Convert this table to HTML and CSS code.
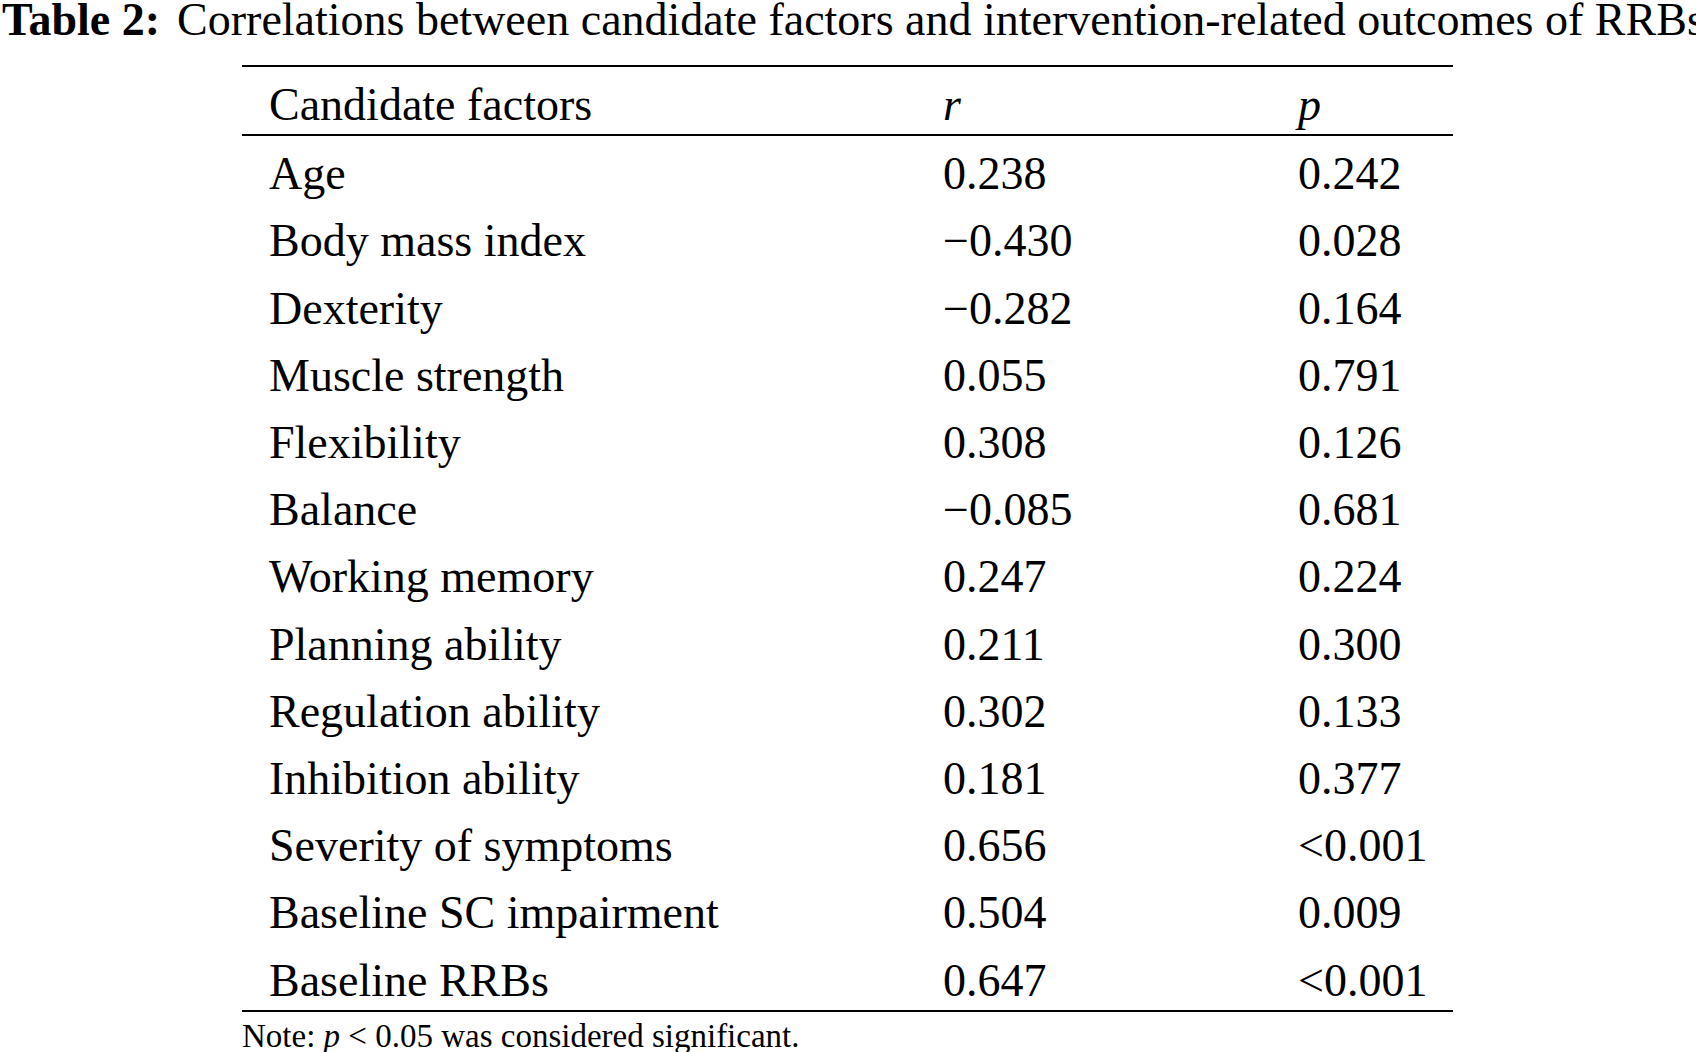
FILE: index.html
```html
<!DOCTYPE html>
<html lang="en">
<head>
<meta charset="utf-8">
<title>Table 2</title>
<link rel="stylesheet" href="styles.css">
</head>
<body>
<div class="caption"><span class="label">Table 2:</span>Correlations between candidate factors and intervention-related outcomes of RRBs</div>
<div class="table-wrap">
<table class="data">
<colgroup><col class="c1"><col class="c2"><col class="c3"></colgroup>
<thead>
<tr><th>Candidate factors</th><th><i>r</i></th><th><i>p</i></th></tr>
</thead>
<tbody>
<tr><td>Age</td><td>0.238</td><td>0.242</td></tr>
<tr><td>Body mass index</td><td>−0.430</td><td>0.028</td></tr>
<tr><td>Dexterity</td><td>−0.282</td><td>0.164</td></tr>
<tr><td>Muscle strength</td><td>0.055</td><td>0.791</td></tr>
<tr><td>Flexibility</td><td>0.308</td><td>0.126</td></tr>
<tr><td>Balance</td><td>−0.085</td><td>0.681</td></tr>
<tr><td>Working memory</td><td>0.247</td><td>0.224</td></tr>
<tr><td>Planning ability</td><td>0.211</td><td>0.300</td></tr>
<tr><td>Regulation ability</td><td>0.302</td><td>0.133</td></tr>
<tr><td>Inhibition ability</td><td>0.181</td><td>0.377</td></tr>
<tr><td>Severity of symptoms</td><td>0.656</td><td>&lt;0.001</td></tr>
<tr><td>Baseline SC impairment</td><td>0.504</td><td>0.009</td></tr>
<tr><td>Baseline RRBs</td><td>0.647</td><td>&lt;0.001</td></tr>
</tbody>
</table>
<p class="note">Note: <i>p</i> &lt; 0.05 was considered significant.</p>
</div>
</body>
</html>
```

FILE: styles.css
```css
html, body {
  margin: 0;
  padding: 0;
  background: #ffffff;
}
body {
  font-family: "Liberation Serif", "Times New Roman", serif;
  color: #000000;
  overflow: hidden;
}
.caption {
  font-size: 46px;
  line-height: 36px;
  white-space: nowrap;
  padding-left: 2px;
  padding-top: 2px;
}
.caption .label {
  font-weight: bold;
  margin-right: 17px;
}
.table-wrap {
  margin-left: 242px;
  width: 1211px;
  padding-top: 27px;
}
.data {
  width: 1211px;
  border-collapse: collapse;
  table-layout: fixed;
  font-size: 46px;
  border-top: 2px solid #000;
  border-bottom: 2px solid #000;
}
.c1 { width: 701px; }
.c2 { width: 355px; }
.c3 { width: 155px; }
.data th, .data td {
  text-align: left;
  font-weight: normal;
  padding: 8px 0 0 0;
  line-height: 59.2px;
  height: 59.2px;
  white-space: nowrap;
  vertical-align: top;
}
.data th:first-child, .data td:first-child {
  padding-left: 27px;
}
.data thead th {
  border-bottom: 2px solid #000;
  padding-top: 8px;
}
.note {
  margin: 0;
  padding-top: 8px;
  font-size: 33px;
  line-height: 33px;
}
```
